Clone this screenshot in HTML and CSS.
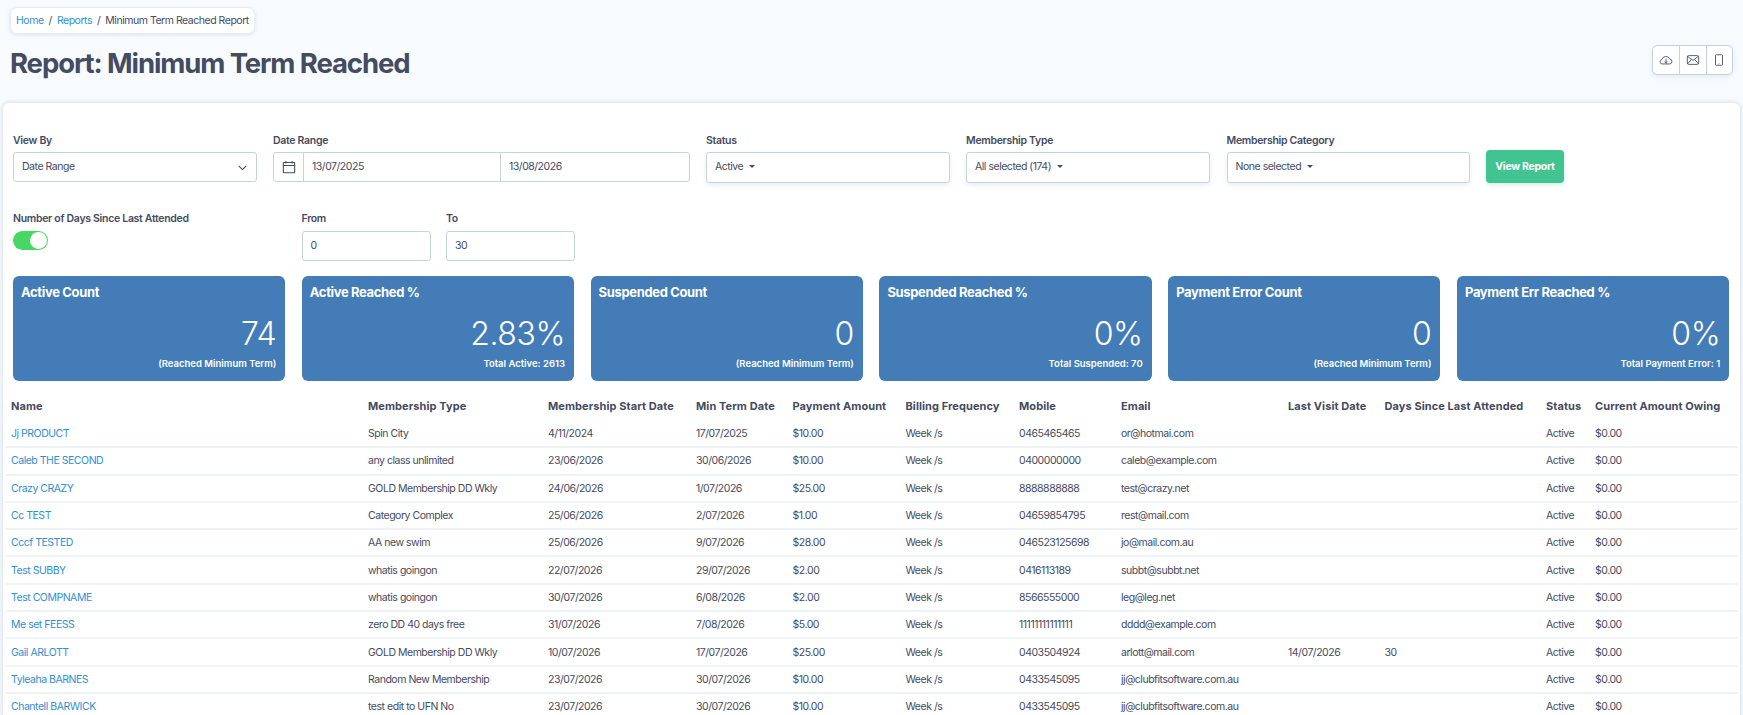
FILE: index.html
```html
<!DOCTYPE html>
<html lang="en">
<head>
    <meta charset="UTF-8">
    <meta name="viewport" content="width=device-width, initial-scale=1.0">
    <title>Report: Minimum Term Reached</title>
    <link rel="stylesheet" href="styles.css">
</head>
<body>
    <div class="page">
        <header class="page-head">
            <div class="head-left">
                <nav class="breadcrumb">
                    <a href="#">Home</a><span class="sep">/</span><a href="#">Reports</a><span class="sep">/</span><span>Minimum Term Reached Report</span>
                </nav>
                <h1>Report: Minimum Term Reached</h1>
            </div>
            <div class="export-group">
                <button type="button" class="export-btn">
                    <svg viewBox="0 0 16 16" width="14" height="14" fill="none" stroke="currentColor" stroke-width="1"><path d="M3.4 12.5A2.6 2.6 0 0 1 3.2 7.4 4.9 4.9 0 0 1 12.4 7 2.8 2.8 0 0 1 12.6 12.5Z"/><path d="M8 6.5V11.5M6.2 9.8 8 11.6l1.8-1.8"/></svg>
                </button>
                <button type="button" class="export-btn">
                    <svg viewBox="0 0 16 16" width="14" height="14" fill="none" stroke="currentColor" stroke-width="1"><rect x="1.5" y="3" width="13" height="10" rx="1.5"/><path d="M1.8 3.8 8 8.5l6.2-4.7M1.8 12.4 6.3 7.3M14.2 12.4 9.7 7.3"/></svg>
                </button>
                <button type="button" class="export-btn">
                    <svg viewBox="0 0 16 16" width="14" height="14" fill="none" stroke="currentColor" stroke-width="1"><rect x="4" y="2" width="8" height="12" rx="1"/><path d="M8 12v.6"/></svg>
                </button>
            </div>
        </header>

        <main class="card">
            <div class="filter-row">
                <div class="field w-viewby">
                    <label>View By</label>
                    <div class="control select-control">Date Range
                        <svg viewBox="0 0 16 16" width="11" height="11" fill="none" stroke="#454b60" stroke-width="1.6"><path d="M2.5 5.5 8 11l5.5-5.5"/></svg>
                    </div>
                </div>
                <div class="field w-date">
                    <label>Date Range</label>
                    <div class="control date-group">
                        <span class="date-icon">
                            <svg viewBox="0 0 16 16" width="14" height="14" fill="none" stroke="#454b60" stroke-width="1.2"><rect x="1.5" y="2.8" width="13" height="11.7" rx="0.5"/><path d="M1.5 6.3h13M4.5 1v3M11.5 1v3"/></svg>
                        </span>
                        <span class="date-input first">13/07/2025</span>
                        <span class="date-input">13/08/2026</span>
                    </div>
                </div>
                <div class="field w-status">
                    <label>Status</label>
                    <div class="control multi-control">Active <span class="caret"></span></div>
                </div>
                <div class="field w-type">
                    <label>Membership Type</label>
                    <div class="control multi-control">All selected (174) <span class="caret"></span></div>
                </div>
                <div class="field w-cat">
                    <label>Membership Category</label>
                    <div class="control multi-control">None selected <span class="caret"></span></div>
                </div>
                <button type="button" class="view-btn">View Report</button>
            </div>

            <div class="filter-row second">
                <div class="field w-days">
                    <label>Number of Days Since Last Attended</label>
                    <span class="toggle"><span class="knob"></span></span>
                </div>
                <div class="field w-num">
                    <label>From</label>
                    <div class="control">0</div>
                </div>
                <div class="field w-num">
                    <label>To</label>
                    <div class="control">30</div>
                </div>
            </div>

            <section class="stats">
                <div class="stat">
                    <h3>Active Count</h3>
                    <div class="stat-num">74</div>
                    <div class="stat-sub">(Reached Minimum Term)</div>
                </div>
                <div class="stat">
                    <h3>Active Reached %</h3>
                    <div class="stat-num">2.83%</div>
                    <div class="stat-sub">Total Active: 2613</div>
                </div>
                <div class="stat">
                    <h3>Suspended Count</h3>
                    <div class="stat-num">0</div>
                    <div class="stat-sub">(Reached Minimum Term)</div>
                </div>
                <div class="stat">
                    <h3>Suspended Reached %</h3>
                    <div class="stat-num">0%</div>
                    <div class="stat-sub">Total Suspended: 70</div>
                </div>
                <div class="stat">
                    <h3>Payment Error Count</h3>
                    <div class="stat-num">0</div>
                    <div class="stat-sub">(Reached Minimum Term)</div>
                </div>
                <div class="stat">
                    <h3>Payment Err Reached %</h3>
                    <div class="stat-num">0%</div>
                    <div class="stat-sub">Total Payment Error: 1</div>
                </div>
            </section>

            <table class="report">
                <colgroup>
                    <col class="c-name"><col class="c-type"><col class="c-start"><col class="c-term"><col class="c-pay"><col class="c-freq"><col class="c-mobile"><col class="c-email"><col class="c-visit"><col class="c-days"><col class="c-status"><col class="c-owing">
                </colgroup>
                <thead>
                    <tr>
                        <th>Name</th><th>Membership Type</th><th>Membership Start Date</th><th>Min Term Date</th><th>Payment Amount</th><th>Billing Frequency</th><th>Mobile</th><th>Email</th><th>Last Visit Date</th><th>Days Since Last Attended</th><th>Status</th><th>Current Amount Owing</th>
                    </tr>
                </thead>
                <tbody>
                    <tr><td><a href="#">Jj PRODUCT</a></td><td>Spin City</td><td>4/11/2024</td><td>17/07/2025</td><td>$10.00</td><td>Week /s</td><td>0465465465</td><td>or@hotmai.com</td><td></td><td></td><td>Active</td><td>$0.00</td></tr>
                    <tr><td><a href="#">Caleb THE SECOND</a></td><td>any class unlimited</td><td>23/06/2026</td><td>30/06/2026</td><td>$10.00</td><td>Week /s</td><td>0400000000</td><td>caleb@example.com</td><td></td><td></td><td>Active</td><td>$0.00</td></tr>
                    <tr><td><a href="#">Crazy CRAZY</a></td><td>GOLD Membership DD Wkly</td><td>24/06/2026</td><td>1/07/2026</td><td>$25.00</td><td>Week /s</td><td>8888888888</td><td>test@crazy.net</td><td></td><td></td><td>Active</td><td>$0.00</td></tr>
                    <tr><td><a href="#">Cc TEST</a></td><td>Category Complex</td><td>25/06/2026</td><td>2/07/2026</td><td>$1.00</td><td>Week /s</td><td>04659854795</td><td>rest@mail.com</td><td></td><td></td><td>Active</td><td>$0.00</td></tr>
                    <tr><td><a href="#">Cccf TESTED</a></td><td>AA new swim</td><td>25/06/2026</td><td>9/07/2026</td><td>$28.00</td><td>Week /s</td><td>046523125698</td><td>jo@mail.com.au</td><td></td><td></td><td>Active</td><td>$0.00</td></tr>
                    <tr><td><a href="#">Test SUBBY</a></td><td>whatis goingon</td><td>22/07/2026</td><td>29/07/2026</td><td>$2.00</td><td>Week /s</td><td>0416113189</td><td>subbt@subbt.net</td><td></td><td></td><td>Active</td><td>$0.00</td></tr>
                    <tr><td><a href="#">Test COMPNAME</a></td><td>whatis goingon</td><td>30/07/2026</td><td>6/08/2026</td><td>$2.00</td><td>Week /s</td><td>8566555000</td><td>leg@leg.net</td><td></td><td></td><td>Active</td><td>$0.00</td></tr>
                    <tr><td><a href="#">Me set FEESS</a></td><td>zero DD 40 days free</td><td>31/07/2026</td><td>7/08/2026</td><td>$5.00</td><td>Week /s</td><td>11111111111111</td><td>dddd@example.com</td><td></td><td></td><td>Active</td><td>$0.00</td></tr>
                    <tr><td><a href="#">Gail ARLOTT</a></td><td>GOLD Membership DD Wkly</td><td>10/07/2026</td><td>17/07/2026</td><td>$25.00</td><td>Week /s</td><td>0403504924</td><td>arlott@mail.com</td><td>14/07/2026</td><td>30</td><td>Active</td><td>$0.00</td></tr>
                    <tr><td><a href="#">Tyleaha BARNES</a></td><td>Random New Membership</td><td>23/07/2026</td><td>30/07/2026</td><td>$10.00</td><td>Week /s</td><td>0433545095</td><td>jj@clubfitsoftware.com.au</td><td></td><td></td><td>Active</td><td>$0.00</td></tr>
                    <tr><td><a href="#">Chantell BARWICK</a></td><td>test edit to UFN No</td><td>23/07/2026</td><td>30/07/2026</td><td>$10.00</td><td>Week /s</td><td>0433545095</td><td>jj@clubfitsoftware.com.au</td><td></td><td></td><td>Active</td><td>$0.00</td></tr>
                </tbody>
            </table>
        </main>
    </div>
</body>
</html>
```

FILE: styles.css
```css
html, body {
    margin: 0;
    padding: 0;
    height: 100%;
    overflow: hidden;
}

body {
    font-family: "Inter", "Liberation Sans", sans-serif;
    font-size: 10.5px;
    letter-spacing: -0.47px;
    color: #454b60;
    background-color: #f8fbfe;
}

a {
    color: #2f8fd2;
    text-decoration: none;
}

.page {
    height: 715px;
    overflow: hidden;
    padding: 7px 3px 0;
    box-sizing: border-box;
}

.page-head {
    display: flex;
    justify-content: space-between;
    align-items: flex-start;
    height: 96px;
    padding: 0 7px 0 7px;
}

.breadcrumb {
    display: inline-block;
    background-color: #fff;
    border: 1px solid #e6edf3;
    border-radius: 7px;
    box-shadow: 0 1px 4px rgba(90, 120, 160, 0.18);
    padding: 0 5px;
    height: 27px;
    line-height: 25px;
    box-sizing: border-box;
}

.breadcrumb .sep {
    margin: 0 5px;
}

h1 {
    margin: 12px 0 0;
    font-size: 27.5px;
    line-height: 34px;
    font-weight: 700;
    letter-spacing: -1.1px;
    color: #454b60;
}

.export-group {
    display: flex;
    margin-top: 38px;
    border: 1px solid #c5d3e0;
    border-radius: 5px;
    background-color: #fff;
    box-shadow: 0 2px 5px rgba(90, 120, 160, 0.12);
}

.export-btn {
    width: 26.5px;
    height: 28px;
    padding: 0;
    border: 0;
    border-left: 1px solid #c5d3e0;
    background: none;
    color: #454b60;
    display: flex;
    align-items: center;
    justify-content: center;
}

.export-btn:first-child {
    border-left: 0;
}

.card {
    height: 640px;
    background-color: #fff;
    border-radius: 6px 6px 0 0;
    box-shadow: 0 0 5px rgba(90, 120, 160, 0.3);
    padding: 31px 2px 0 2px;
}

.filter-row {
    display: flex;
    align-items: flex-start;
    gap: 16.5px;
    padding: 0 8px;
}

.filter-row.second {
    margin-top: 29px;
    gap: 15.5px;
}

.field label {
    display: block;
    font-weight: 600;
    font-size: 10.5px;
    letter-spacing: -0.3px;
    line-height: 14px;
    margin-bottom: 4px;
}

.second .field label {
    margin-bottom: 5px;
}

.control {
    height: 30px;
    border: 1px solid #c5d3e0;
    border-radius: 3px;
    background-color: #fff;
    box-sizing: border-box;
    padding: 0 8px;
    line-height: 28px;
}

.w-viewby { width: 243.5px; }
.w-date { width: 416.5px; }
.w-status { width: 243.5px; }
.w-type { width: 244px; }
.w-cat { width: 243px; }
.w-days { width: 273px; }
.w-num { width: 129px; }

.select-control {
    display: flex;
    justify-content: space-between;
    align-items: center;
}

.date-group {
    display: flex;
    padding: 0;
}

.date-icon {
    width: 29px;
    flex: none;
    display: flex;
    align-items: center;
    justify-content: center;
    border-right: 1px solid #c5d3e0;
}

.date-input {
    flex: 1;
    padding-left: 8px;
}

.date-input.first {
    flex: none;
    width: 188px;
    border-right: 1px solid #c5d3e0;
}

.multi-control {
    height: 31px;
    box-shadow: 0 2px 5px rgba(90, 120, 160, 0.14);
}

.caret {
    display: inline-block;
    width: 0;
    height: 0;
    margin-left: 3px;
    vertical-align: 2px;
    border-top: 3px solid #454b60;
    border-left: 3px solid transparent;
    border-right: 3px solid transparent;
}

.view-btn {
    width: 78px;
    height: 33px;
    margin-top: 16px;
    border: 0;
    border-radius: 4px;
    background-color: #41c392;
    color: #fff;
    font-family: inherit;
    font-size: 10.5px;
    letter-spacing: -0.3px;
    font-weight: 700;
    box-shadow: 0 2px 4px rgba(65, 195, 146, 0.25);
}

.toggle {
    display: block;
    width: 35px;
    height: 19px;
    border-radius: 10px;
    background-color: #48d763;
    position: relative;
}

.knob {
    position: absolute;
    top: 1px;
    right: 1px;
    width: 17px;
    height: 17px;
    border-radius: 50%;
    background-color: #fff;
}

.stats {
    display: flex;
    gap: 16.5px;
    margin-top: 15px;
    padding: 0 0 0 8px;
}

.stat {
    flex: none;
    width: 272.3px;
    height: 105px;
    box-sizing: border-box;
    background-color: #437cb6;
    border-radius: 6px;
    color: #fff;
    padding: 8px 9px 0 8px;
    letter-spacing: 0;
}

.stat h3 {
    margin: 0;
    font-size: 13px;
    line-height: 16px;
    font-weight: 700;
    letter-spacing: -0.35px;
}

.stat-num {
    text-align: right;
    font-size: 32px;
    line-height: 38px;
    font-weight: 300;
    letter-spacing: -0.4px;
    margin-top: 15px;
}

.stat-sub {
    text-align: right;
    font-size: 9.5px;
    line-height: 12px;
    font-weight: 600;
    margin-top: 5px;
}

.report {
    width: 1733px;
    table-layout: fixed;
    border-collapse: collapse;
    margin-top: 11px;
}

.c-name { width: 357px; }
.c-type { width: 180px; }
.c-start { width: 148px; }
.c-term { width: 96.5px; }
.c-pay { width: 113px; }
.c-freq { width: 113.5px; }
.c-mobile { width: 102px; }
.c-email { width: 167px; }
.c-visit { width: 96.5px; }
.c-days { width: 161.5px; }
.c-status { width: 49px; }
.c-owing { width: 149px; }

.report th {
    height: 28px;
    padding: 0 6px;
    text-align: left;
    font-size: 11px;
    font-weight: 700;
    letter-spacing: 0.08px;
    white-space: nowrap;
}

.report td {
    height: 27.3px;
    padding: 0 6px;
    box-sizing: border-box;
    border-bottom: 2px solid #f1f4f7;
    white-space: nowrap;
}
```
